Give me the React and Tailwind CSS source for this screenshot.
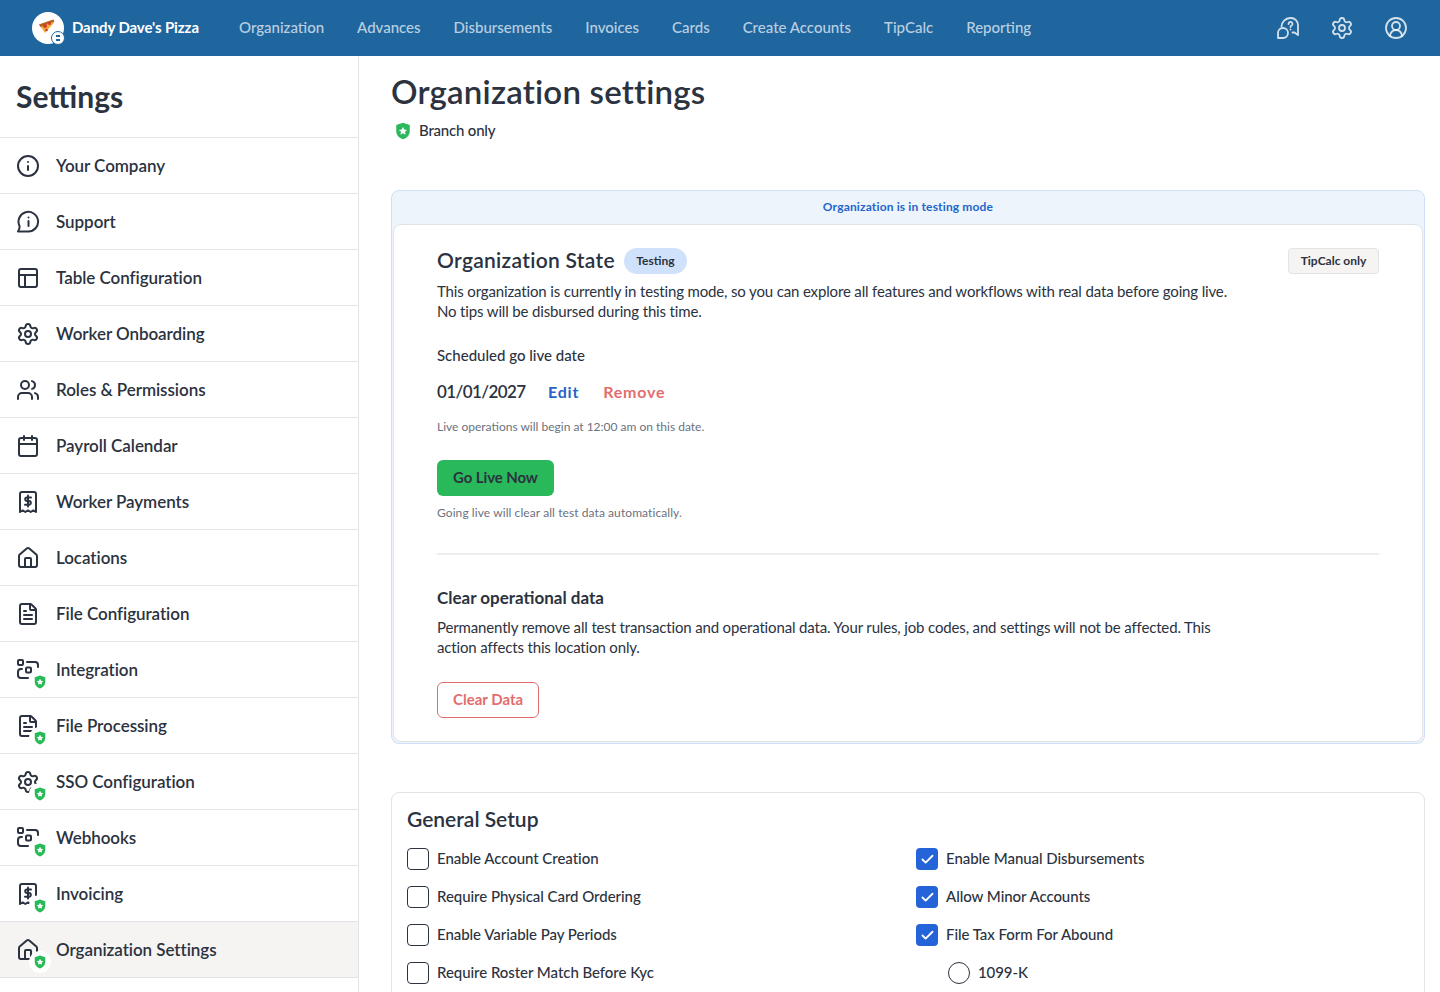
import React from 'react';
import { Info, PanelsTopLeft, Settings, Users, Calendar, House, FileText, Check, CircleUserRound } from 'lucide-react';

const Support = (p) => (
    <svg viewBox="0 0 24 24" fill="none" stroke="currentColor" strokeWidth="2" strokeLinecap="round" strokeLinejoin="round" {...p}>
        <path d="M2 21.500h10A9.800 9.800 0 1 0 3.500 16c.4 2-.4 3.800-1.500 5.500Z" />
        <path d="M12.500 11v5" />
        <path d="M12.500 7.500h.01" />
    </svg>
);

const Receipt = (p) => (
    <svg viewBox="0 0 24 24" fill="none" stroke="currentColor" strokeWidth="2" strokeLinecap="round" strokeLinejoin="round" {...p}>
        <path d="M4 22V4a2 2 0 0 1 2-2h12a2 2 0 0 1 2 2v18l-2.700-1.600-2.600 1.600-2.700-1.600L9.300 22l-2.600-1.600Z" />
        <path d="M15 7.500h-4a1.800 1.800 0 0 0 0 3.600h2a1.800 1.800 0 0 1 0 3.600H9" />
        <path d="M12 5.500v11" />
    </svg>
);

const Integration = (p) => (
    <svg viewBox="0 0 24 24" fill="none" stroke="currentColor" strokeWidth="2" strokeLinecap="round" strokeLinejoin="round" {...p}>
        <rect x="2" y="2" width="5" height="5" rx="1" />
        <rect x="10" y="9.500" width="5" height="5" rx="1" />
        <path d="M11 4h8a3 3 0 0 1 3 3v2" />
        <path d="M7 20H5a3 3 0 0 1-3-3v-3a3 3 0 0 1 3-3h1" />
        <path d="M7 20h5" />
    </svg>
);

const Shield = ({ className }) => (
    <svg viewBox="0 0 24 24" className={className}>
        <path d="M12 1 3 4v8c0 5.500 3.800 9.500 9 11 5.200-1.500 9-5.500 9-11V4Z" fill="#29b95a" />
        <path d="m12 6.500 1.700 3.500 3.800.5-2.800 2.600.7 3.800-3.400-1.900-3.400 1.900.7-3.800-2.800-2.600 3.800-.5Z" fill="#fff" />
    </svg>
);

const HelpChat = (p) => (
    <svg viewBox="0 0 24 24" fill="none" stroke="currentColor" strokeWidth="1.800" strokeLinecap="round" strokeLinejoin="round" {...p}>
        <path d="M5.500 10.500A9 9 0 0 1 14 2h1a7 7 0 0 1 7 7v10l-3.500-2.500h-2" />
        <path d="M2 22v-5a5 5 0 1 1 5 5Z" />
        <path d="M12.500 8a2 2 0 1 1 2.800 1.800c-.6.300-.8.700-.8 1.200" />
        <path d="M14.500 13.500h.01" />
    </svg>
);

const sidebarItems = [
    { label: 'Your Company', icon: Info },
    { label: 'Support', icon: Support },
    { label: 'Table Configuration', icon: PanelsTopLeft },
    { label: 'Worker Onboarding', icon: Settings },
    { label: 'Roles & Permissions', icon: Users },
    { label: 'Payroll Calendar', icon: Calendar },
    { label: 'Worker Payments', icon: Receipt },
    { label: 'Locations', icon: House },
    { label: 'File Configuration', icon: FileText },
    { label: 'Integration', icon: Integration, badge: true },
    { label: 'File Processing', icon: FileText, badge: true },
    { label: 'SSO Configuration', icon: Settings, badge: true },
    { label: 'Webhooks', icon: Integration, badge: true },
    { label: 'Invoicing', icon: Receipt, badge: true },
    { label: 'Organization Settings', icon: House, badge: true, active: true },
];

const navItems = ['Organization', 'Advances', 'Disbursements', 'Invoices', 'Cards', 'Create Accounts', 'TipCalc', 'Reporting'];

const leftChecks = ['Enable Account Creation', 'Require Physical Card Ordering', 'Enable Variable Pay Periods', 'Require Roster Match Before Kyc'];
const rightChecks = ['Enable Manual Disbursements', 'Allow Minor Accounts', 'File Tax Form For Abound'];

const Logo = () => (
    <div className="relative w-8 h-8 rounded-full bg-white shrink-0">
        <svg viewBox="0 0 32 32" className="w-8 h-8">
            <path d="M7 12.500 21.500 7.500c1 2.500.5 4-1 5L13 21Z" fill="#f2b23e" />
            <path d="M7 12.500 21.500 7.500l.8 2L8.500 15Z" fill="#b5622a" />
            <circle cx="13" cy="14" r="2" fill="#d8392b" />
            <circle cx="17.500" cy="11.500" r="1.500" fill="#d8392b" />
            <circle cx="14.500" cy="18" r="1.300" fill="#d8392b" />
        </svg>
        <div className="absolute right-0 bottom-0 translate-x-[1px] translate-y-[1px] w-[14px] h-[14px] rounded-full bg-white border border-[#1f669f] flex flex-col items-center justify-center gap-[2px]">
            <div className="w-[4px] h-[2px] bg-[#1f669f]"></div>
            <div className="w-[4px] h-[2px] bg-[#1f669f]"></div>
        </div>
    </div>
);

const CheckRow = ({ label, checked }) => (
    <div className="flex items-center gap-2 h-[22px]">
        {checked ? (
            <div className="w-[22px] h-[22px] rounded-[4px] bg-[#2563d9] flex items-center justify-center">
                <Check size={15} strokeWidth={3} className="text-white" />
            </div>
        ) : (
            <div className="w-[22px] h-[22px] rounded-[4px] border border-[#2b3240] bg-white"></div>
        )}
        <span className="pb-[2px] text-[15px] font-medium tracking-[-0.05px] text-[#2b3240]">{label}</span>
    </div>
);

const App = () => {
    return (
        <div className="h-[992px] overflow-hidden bg-white text-[#2b3240] font-['Lato',sans-serif]">
            {/* Header */}
            <header className="h-14 bg-[#1f669f] flex items-center justify-between pl-8 pr-[32px]">
                <div className="flex items-center">
                    <Logo />
                    <span className="ml-2 pb-[2px] text-[15px] font-bold tracking-[-0.1px] text-white w-[167px]">Dandy Dave's Pizza</span>
                    <nav className="flex items-center gap-[33px] pb-[2px]">
                        {navItems.map((item) => (
                            <span key={item} className="text-[15px] font-medium text-white/70">{item}</span>
                        ))}
                    </nav>
                </div>
                <div className="flex items-center gap-[30px] text-white/80">
                    <HelpChat width={24} height={24} />
                    <Settings size={24} strokeWidth={1.8} />
                    <CircleUserRound size={24} strokeWidth={1.8} />
                </div>
            </header>

            <div className="flex">
                {/* Sidebar */}
                <aside className="w-[359px] shrink-0 border-r border-[#e1e3e6]">
                    <div className="h-[82px] border-b border-[#e1e3e6] pl-4 flex items-center">
                        <h1 className="text-[30px] font-bold">Settings</h1>
                    </div>
                    {sidebarItems.map((item) => {
                        const Icon = item.icon;
                        return (
                            <div key={item.label} className={`h-14 flex items-center pl-4 border-b border-[#e1e3e6] ${item.active ? 'bg-[#f5f4f2]' : ''}`}>
                                <div className="relative w-6 h-6 shrink-0">
                                    <Icon width={24} height={24} size={24} strokeWidth={2} className="text-[#2b3240]" />
                                    {item.badge && (
                                        <div className="absolute left-[13px] top-[13px] w-[22px] h-[22px] rounded-full bg-white flex items-center justify-center">
                                            <Shield className="w-[14px] h-[14px]" />
                                        </div>
                                    )}
                                </div>
                                <span className="ml-4 text-[17px] font-semibold tracking-[-0.05px]">{item.label}</span>
                            </div>
                        );
                    })}
                </aside>

                {/* Main */}
                <main className="flex-1 pl-8 pr-[15px]">
                    <h2 className="mt-[13px] text-[33px] leading-[44px] font-semibold tracking-[0.2px]">Organization settings</h2>
                    <div className="mt-[8px] flex items-center gap-[7px] pl-[3px] h-5">
                        <Shield className="w-[18px] h-[18px]" />
                        <span className="pb-[2px] text-[15px] font-medium tracking-[-0.2px]">Branch only</span>
                    </div>

                    {/* Org state card */}
                    <section className="mt-[49px] border border-[#cfe0f7] bg-[#edf4fc] rounded-[8px] px-[1px] pb-[1px]">
                        <div className="h-[33px] pb-[2px] flex items-center justify-center text-[12px] font-bold tracking-[0.15px] text-[#1f66c9]">Organization is in testing mode</div>
                        <div className="bg-white border border-[#e1e3e6] rounded-[8px] pl-[43px] pr-[43px] pt-[23px] pb-[23px]">
                            <div className="flex items-center justify-between">
                                <div className="flex items-center gap-[9px]">
                                    <h3 className="pb-[2px] text-[21px] leading-[24px] font-semibold tracking-[0.3px]">Organization State</h3>
                                    <span className="h-[26px] w-[63px] justify-center rounded-full bg-[#d0e2fb] text-[12px] font-bold flex items-center">Testing</span>
                                </div>
                                <span className="h-[26px] w-[91px] justify-center rounded-[4px] bg-[#f5f4f2] border border-[#e1e3e6] text-[12px] font-bold flex items-center">TipCalc only</span>
                            </div>
                            <p className="mt-[7px] text-[15px] leading-[20px] tracking-[-0.15px] max-w-[800px]">
                                This organization is currently in testing mode, so you can explore all features and workflows with real data before going live. No tips will be disbursed during this time.
                            </p>
                            <p className="mt-[24px] text-[15px] leading-[20px] font-medium">Scheduled go live date</p>
                            <div className="mt-[15px] flex items-center gap-6 h-6">
                                <span className="w-[87px] text-[17px] font-semibold tracking-[-0.6px]">01/01/2027</span>
                                <span className="text-[16px] font-bold text-[#2563c9] tracking-[0.8px]">Edit</span>
                                <span className="text-[16px] font-bold text-[#e26d6d] tracking-[0.8px]">Remove</span>
                            </div>
                            <p className="mt-[15px] text-[12px] leading-[16px] text-[#6b7280]">Live operations will begin at 12:00 am on this date.</p>
                            <button className="mt-[25px] h-9 pb-[2px] px-4 rounded-[6px] bg-[#29b95a] text-[15px] font-bold tracking-[-0.1px] block">Go Live Now</button>
                            <p className="mt-[9px] text-[12px] leading-[16px] tracking-[0.08px] text-[#6b7280]">Going live will clear all test data automatically.</p>
                            <div className="mt-[32px] border-t-2 border-[#eceded]"></div>
                            <h4 className="mt-[31px] text-[17px] leading-[24px] font-bold">Clear operational data</h4>
                            <p className="mt-[7px] text-[15px] leading-[20px] tracking-[-0.15px] max-w-[800px]">
                                Permanently remove all test transaction and operational data. Your rules, job codes, and settings will not be affected. This action affects this location only.
                            </p>
                            <button className="mt-[25px] h-9 pb-[2px] px-[15px] rounded-[6px] border border-[#e26d6d] text-[#e26d6d] text-[15px] font-bold block">Clear Data</button>
                        </div>
                    </section>

                    {/* General setup */}
                    <section className="mt-[48px] border border-[#e1e3e6] rounded-[8px] px-[15px] pt-[14px] pb-6">
                        <h3 className="text-[21px] leading-[24px] font-semibold">General Setup</h3>
                        <div className="mt-[17px] grid grid-cols-[509px_1fr]">
                            <div className="flex flex-col gap-4">
                                {leftChecks.map((c) => <CheckRow key={c} label={c} />)}
                            </div>
                            <div className="flex flex-col gap-4">
                                {rightChecks.map((c) => <CheckRow key={c} label={c} checked />)}
                                <div className="flex items-center gap-2 h-[22px] pl-8">
                                    <div className="w-[22px] h-[22px] rounded-full border border-[#2b3240]"></div>
                                    <span className="pb-[2px] text-[15px] font-medium tracking-[-0.1px]">1099-K</span>
                                </div>
                            </div>
                        </div>
                    </section>
                </main>
            </div>
        </div>
    );
};

export default App;
